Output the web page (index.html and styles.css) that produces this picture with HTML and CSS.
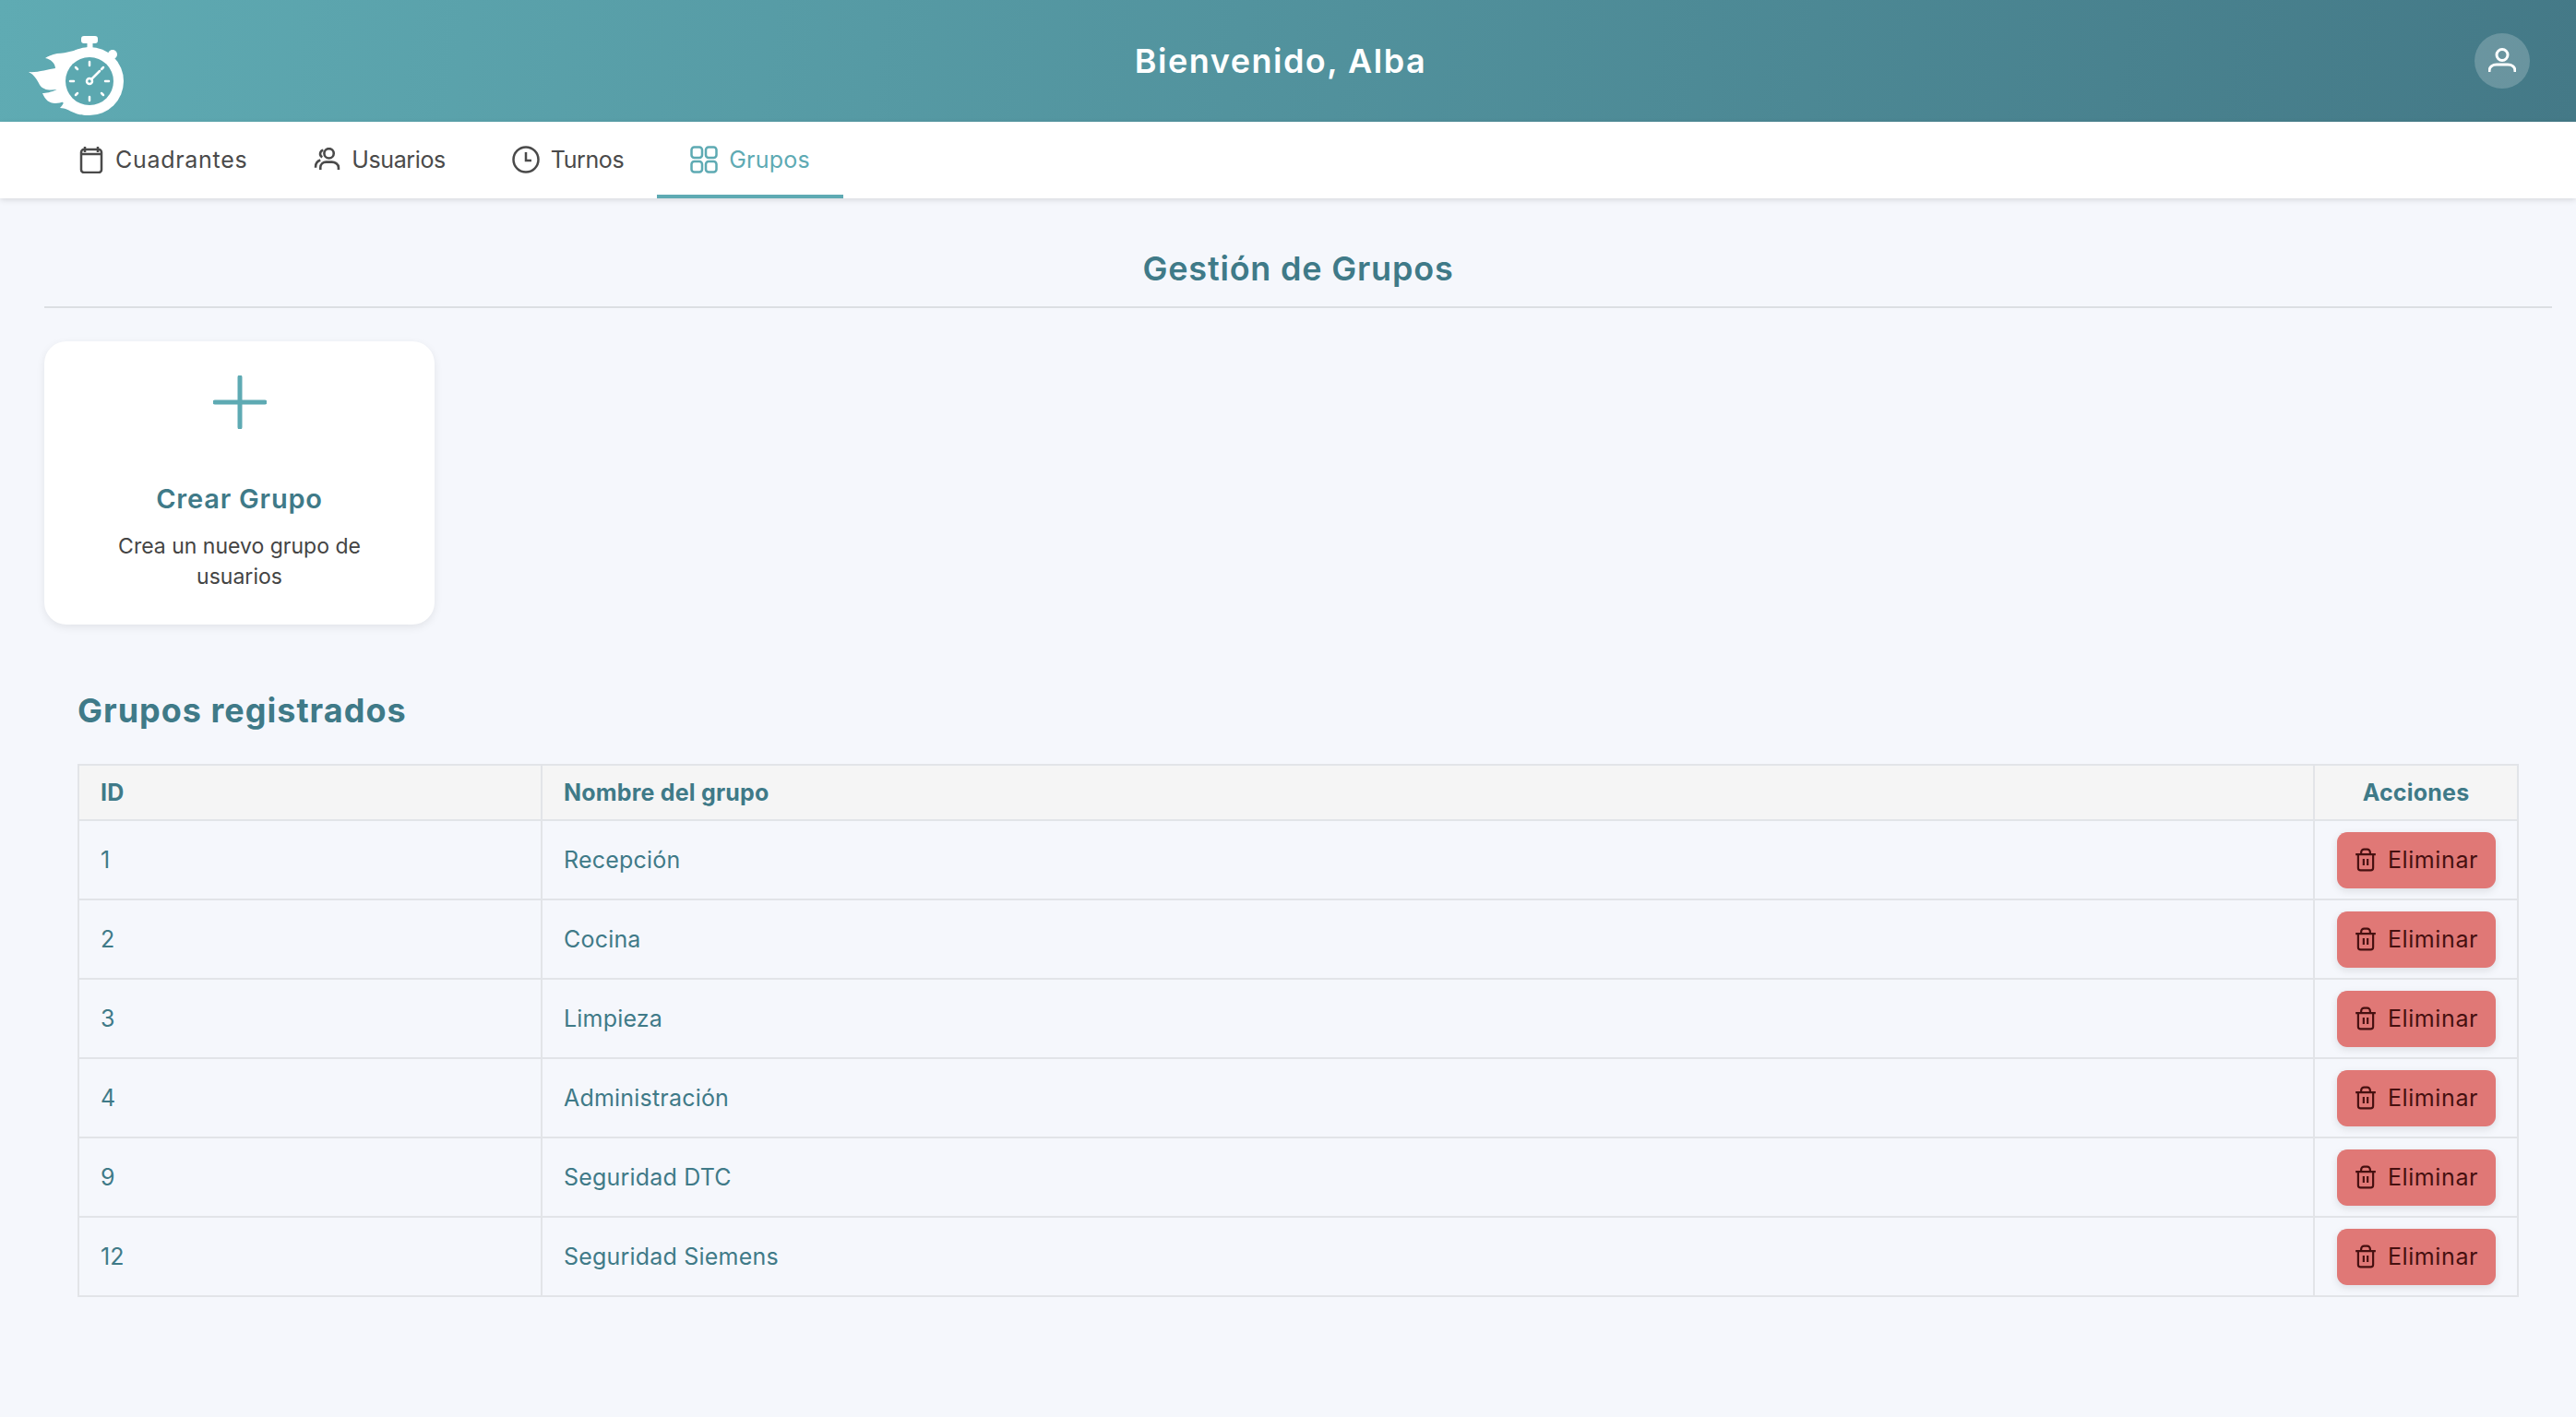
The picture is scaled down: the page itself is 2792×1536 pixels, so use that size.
FILE: index.html
```html
<!DOCTYPE html>
<html lang="es">
<head>
    <meta charset="UTF-8">
    <title>Gestión de Grupos</title>
    <link rel="stylesheet" href="styles.css">
</head>
<body>
<svg class="defs">
    <defs>
        <symbol id="trash" viewBox="0 0 24 24">
            <path d="M2 6.500h20M4.500 6.500V20a2.500 2.500 0 0 0 2.500 2.500h10a2.500 2.500 0 0 0 2.500-2.500V6.500M7.500 6.500V4.500a3 3 0 0 1 3-3h3a3 3 0 0 1 3 3v2M10 11v6.500M14 11v6.500"/>
        </symbol>
    </defs>
</svg>
<header class="topbar">
    <svg class="logo" viewBox="28 38 110 90">
        <rect x="88" y="39" width="18" height="8" rx="3" fill="#fff"/>
        <rect x="94.500" y="46" width="6" height="10" fill="#fff"/>
        <circle cx="122" cy="59" r="5" fill="#fff"/>
        <path fill="#fff" d="M97 51C85 53 72 58 62 58C56 59 52 61 49 63C55 64 60 69 60 74C52 75 40 79 31 78C37 81 40 86 43 92C47 98 54 98 62 97C55 100 50 101 46 101C49 108 53 112 60 112C63 112 66 111 70 110C68 113 67 115 65 117C71 117 75 120 80 122C86 125 92 125 97 125L110 100Z"/>
        <circle cx="97" cy="88" r="37" fill="#fff"/>
        <circle cx="97" cy="88" r="26" fill="#5ca8b0"/>
        <path stroke="#fff" stroke-width="2.500" stroke-linecap="round" d="M97 67v4M97 105v4M76 88h4M114 88h4M82 103l2-2M110 75l2-2M82 73l2 2M110 101l2 2M99 86l9-9"/>
        <circle cx="97" cy="88" r="3" fill="none" stroke="#fff" stroke-width="2.500"/>
    </svg>
    <h1 class="welcome">Bienvenido, Alba</h1>
    <div class="avatar">
        <svg viewBox="0 0 30 30" class="avatar-icon">
            <circle cx="15" cy="8.500" r="6"/>
            <path d="M1 27v-1c0-5 4-7 8-7h12c4 0 8 2 8 7v1"/>
        </svg>
    </div>
</header>
<nav class="tabs">
    <a class="tab tab-wide">
        <svg viewBox="0 0 24 30" class="tab-icon cal">
            <path d="M5 1v6M19 1v6M1 9h22"/>
            <rect x="1" y="4" width="22" height="25" rx="3"/>
        </svg>
        <span>Cuadrantes</span>
    </a>
    <a class="tab">
        <svg viewBox="0 0 28 24" class="tab-icon users">
            <circle cx="16" cy="6" r="5"/>
            <path d="M7 23v-2c0-4 3-6 6-6h6c3 0 7 2 7 6v2M10 2.500a4 4 0 0 0-1 7.500M7 13c-3 1-5 3-5 7v1"/>
        </svg>
        <span>Usuarios</span>
    </a>
    <a class="tab">
        <svg viewBox="0 0 30 30" class="tab-icon clock">
            <circle cx="15" cy="15" r="13.500"/>
            <path d="M15 7v9h6"/>
        </svg>
        <span>Turnos</span>
    </a>
    <a class="tab active">
        <svg viewBox="0 0 30 30" class="tab-icon grid">
            <rect x="1.500" y="1.500" width="11.500" height="11.500" rx="3"/>
            <rect x="17" y="1.500" width="11.500" height="11.500" rx="3"/>
            <rect x="1.500" y="17" width="11.500" height="11.500" rx="3"/>
            <rect x="17" y="17" width="11.500" height="11.500" rx="3"/>
        </svg>
        <span>Grupos</span>
    </a>
</nav>
<main class="content">
    <h2 class="page-title">Gestión de Grupos</h2>
    <div class="card">
        <svg viewBox="0 0 58 58" class="plus"><path d="M29 2v54M2 29h54"/></svg>
        <h3>Crear Grupo</h3>
        <p>Crea un nuevo grupo de usuarios</p>
    </div>
    <section class="groups">
        <h2>Grupos registrados</h2>
        <table class="group-table">
            <thead>
            <tr>
                <th class="col-id">ID</th>
                <th>Nombre del grupo</th>
                <th class="col-actions">Acciones</th>
            </tr>
            </thead>
            <tbody>
            <tr>
                <td>1</td>
                <td>Recepción</td>
                <td class="col-actions"><button class="btn-delete"><svg class="trash"><use href="#trash"/></svg>Eliminar</button></td>
            </tr>
            <tr>
                <td>2</td>
                <td>Cocina</td>
                <td class="col-actions"><button class="btn-delete"><svg class="trash"><use href="#trash"/></svg>Eliminar</button></td>
            </tr>
            <tr>
                <td>3</td>
                <td>Limpieza</td>
                <td class="col-actions"><button class="btn-delete"><svg class="trash"><use href="#trash"/></svg>Eliminar</button></td>
            </tr>
            <tr>
                <td>4</td>
                <td>Administración</td>
                <td class="col-actions"><button class="btn-delete"><svg class="trash"><use href="#trash"/></svg>Eliminar</button></td>
            </tr>
            <tr>
                <td>9</td>
                <td>Seguridad DTC</td>
                <td class="col-actions"><button class="btn-delete"><svg class="trash"><use href="#trash"/></svg>Eliminar</button></td>
            </tr>
            <tr>
                <td>12</td>
                <td>Seguridad Siemens</td>
                <td class="col-actions"><button class="btn-delete"><svg class="trash"><use href="#trash"/></svg>Eliminar</button></td>
            </tr>
            </tbody>
        </table>
    </section>
</main>
</body>
</html>
```

FILE: styles.css
```css
* {
    box-sizing: border-box;
}

html, body {
    height: 100%;
}

body {
    margin: 0;
    background: #f5f7fc;
    font-family: "Inter", "Liberation Sans", sans-serif;
    color: #3f7a88;
    overflow: hidden;
}

.defs {
    display: none;
}

.topbar {
    height: 132px;
    display: flex;
    align-items: center;
    padding: 0 50px 0 28px;
    background: linear-gradient(100deg, #5fabb3 0%, #447987 100%);
}

.logo {
    width: 110px;
    height: 90px;
    align-self: flex-end;
    margin-bottom: 4px;
}

.welcome {
    flex: 1;
    margin: 0;
    padding-right: 44px;
    text-align: center;
    color: #fff;
    font-size: 36px;
    font-weight: 600;
    letter-spacing: 1.500px;
}

.avatar {
    width: 60px;
    height: 60px;
    border-radius: 50%;
    background: rgba(255, 255, 255, .2);
    display: flex;
    align-items: center;
    justify-content: center;
}

.avatar-icon {
    width: 30px;
    height: 30px;
    fill: none;
    stroke: #fff;
    stroke-width: 3;
}

.tabs {
    height: 83px;
    display: flex;
    padding-left: 49px;
    background: #fff;
    box-shadow: 0 2px 6px rgba(0, 0, 0, .12);
    position: relative;
}

.tab {
    display: flex;
    align-items: center;
    gap: 12px;
    padding: 2px 36px 0;
    color: #4a4a4a;
    font-size: 25px;
    letter-spacing: -.4px;
    border-bottom: 4px solid transparent;
}

.tab-wide {
    letter-spacing: .7px;
}

.tab.active {
    color: #5eaab3;
    letter-spacing: .2px;
    border-bottom-color: #5eaab3;
}

.tab-icon {
    fill: none;
    stroke: currentColor;
    stroke-width: 2.500;
    flex: none;
}

.cal {
    width: 28px;
    height: 30px;
}

.users {
    width: 29px;
    height: 25px;
}

.clock,
.grid {
    width: 30px;
    height: 30px;
}

.content {
    padding: 0 26px 0 48px;
}

.page-title {
    margin: 0;
    height: 119px;
    line-height: 152px;
    border-bottom: 2px solid #dcdfe3;
    text-align: center;
    font-size: 36px;
    font-weight: 600;
    letter-spacing: .8px;
}

.card {
    width: 423px;
    height: 307px;
    margin-top: 36px;
    padding: 37px 40px 0;
    background: #fff;
    border-radius: 24px;
    box-shadow: 0 3px 10px rgba(0, 0, 0, .08);
    display: flex;
    flex-direction: column;
    align-items: center;
    text-align: center;
}

.plus {
    width: 58px;
    height: 58px;
    fill: none;
    stroke: #5eaab3;
    stroke-width: 5;
    stroke-linecap: round;
}

.card h3 {
    margin: 56px 0 0;
    font-size: 29px;
    line-height: 40px;
    font-weight: 600;
    letter-spacing: .8px;
}

.card p {
    margin: 15px 0 0;
    color: #444;
    font-size: 23px;
    line-height: 33px;
}

.groups {
    padding: 0 36px 0 36px;
}

.groups h2 {
    margin: 65px 0 30px;
    font-size: 36px;
    line-height: 56px;
    font-weight: 700;
    letter-spacing: 1px;
}

.group-table {
    width: 100%;
    border-collapse: collapse;
    table-layout: fixed;
    font-size: 25px;
    letter-spacing: .2px;
}

.group-table th,
.group-table td {
    border: 2px solid #e2e4e8;
    padding: 0 23px;
    text-align: left;
}

.group-table th {
    height: 60px;
    background: #f5f5f5;
    font-size: 25px;
    font-weight: 700;
}

.group-table td {
    height: 86px;
}

.col-id {
    width: 502px;
}

.group-table .col-actions {
    width: 221px;
    text-align: center;
}

.btn-delete {
    width: 172px;
    height: 61px;
    border: 0;
    border-radius: 11px;
    background: #e07876;
    box-shadow: 0 3px 8px rgba(0, 0, 0, .1);
    color: #461010;
    font: inherit;
    letter-spacing: .6px;
    display: inline-flex;
    align-items: center;
    justify-content: center;
    gap: 11px;
    vertical-align: middle;
}

.trash {
    width: 26px;
    height: 26px;
    fill: none;
    stroke: currentColor;
    stroke-width: 2;
    flex: none;
}
```
